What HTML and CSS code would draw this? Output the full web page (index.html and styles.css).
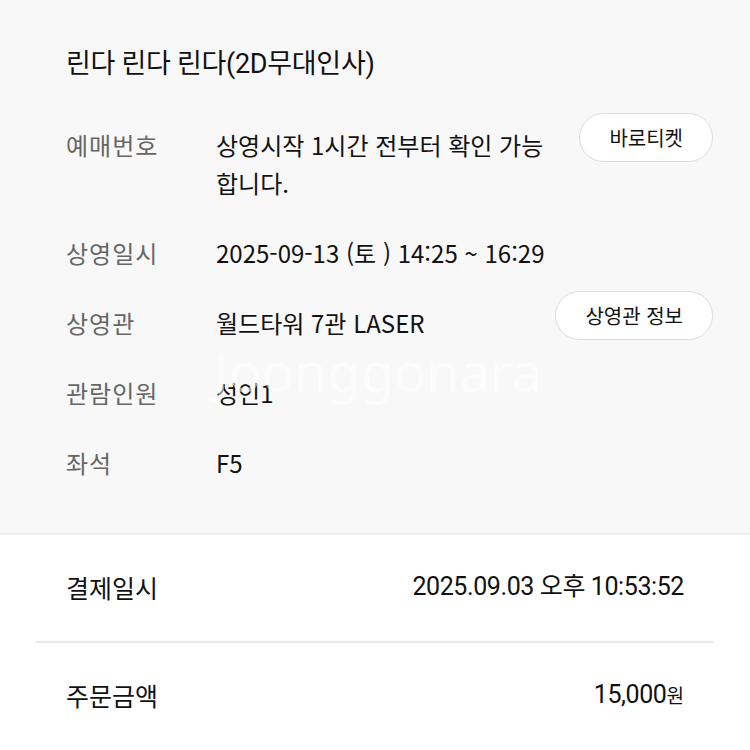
FILE: index.html
```html
<!DOCTYPE html>
<html lang="ko">
<head>
<meta charset="utf-8">
<link rel="stylesheet" href="styles.css">
</head>
<body>
<div class="page">
  <section class="info">
    <h1 class="title">린다 린다 린다(2D무대인사)</h1>
    <div class="rows">
      <div class="row">
        <div class="label">예매번호</div>
        <div class="value">상영시작 1시간 전부터 확인 가능합니다.</div>
        <button class="pill">바로티켓</button>
      </div>
      <div class="row">
        <div class="label">상영일시</div>
        <div class="value">2025-09-13 (토 ) 14:25 ~ 16:29</div>
      </div>
      <div class="row">
        <div class="label">상영관</div>
        <div class="value">월드타워 7관 LASER</div>
        <button class="pill">상영관 정보</button>
      </div>
      <div class="row">
        <div class="label">관람인원</div>
        <div class="value">성인1</div>
      </div>
      <div class="row">
        <div class="label">좌석</div>
        <div class="value">F5</div>
      </div>
    </div>
    <div class="watermark" aria-hidden="true">Joonggonara</div>
  </section>
  <section class="pay">
    <div class="pay-row">
      <span class="pay-label">결제일시</span>
      <span class="pay-value">2025.09.03 오후 10:53:52</span>
    </div>
    <div class="pay-row">
      <span class="pay-label">주문금액</span>
      <span class="pay-value">15,000<small class="won">원</small></span>
    </div>
  </section>
</div>
</body>
</html>
```
FILE: styles.css
```css
html, body {
  margin: 0;
  padding: 0;
  background: #ffffff;
}
body {
  font-family: "Noto Sans CJK KR", "Noto Sans", sans-serif;
  color: #111;
}
.page {
  width: 750px;
  height: 750px;
  overflow: hidden;
}
.info {
  position: relative;
  background: #f8f8f8;
  padding: 45px 37px 51px 66px;
  border-bottom: 2px solid #ececec;
  height: 437px;
}
.title {
  margin: 0;
  font-family: Roboto, "Noto Sans CJK KR", sans-serif;
  font-size: 27px;
  font-weight: 400;
  line-height: 38px;
  letter-spacing: -0.3px;
  color: #111;
}
.rows {
  margin-top: 43px;
  display: flex;
  flex-direction: column;
  gap: 32px;
}
.row {
  display: grid;
  grid-template-columns: 150px 1fr auto;
  align-items: start;
}
.label {
  font-size: 24px;
  line-height: 38px;
  letter-spacing: 1px;
  color: #666;
}
.value {
  font-size: 24px;
  line-height: 38px;
  color: #111;
  max-width: 345px;
}
.pill {
  margin-top: -13px;
  height: 49px;
  padding: 0 29px;
  border: 1.5px solid #dcdcdc;
  border-radius: 25px;
  background: #fff;
  font-family: "Noto Sans CJK KR", "Noto Sans", sans-serif;
  font-size: 20px;
  color: #111;
}
.watermark {
  position: absolute;
  left: 214px;
  top: 334px;
  font-family: "Noto Sans", sans-serif;
  font-size: 54px;
  color: rgba(255, 255, 255, 0.55);
  pointer-events: none;
}
.pay {
  padding: 0 36px;
}
.pay-row {
  display: flex;
  justify-content: space-between;
  align-items: center;
  padding: 33px 30px 35px;
  font-family: Roboto, "Noto Sans CJK KR", sans-serif;
  font-size: 25px;
  line-height: 38px;
  color: #111;
}
.pay-row + .pay-row {
  border-top: 2px solid #e8e8e8;
  padding-top: 33px;
}
.pay-label {
  font-family: "Noto Sans CJK KR", sans-serif;
}
.pay-value {
  letter-spacing: -0.4px;
}
.won {
  font-family: "Noto Sans CJK KR", sans-serif;
  font-size: 19px;
  letter-spacing: 0;
}
```
